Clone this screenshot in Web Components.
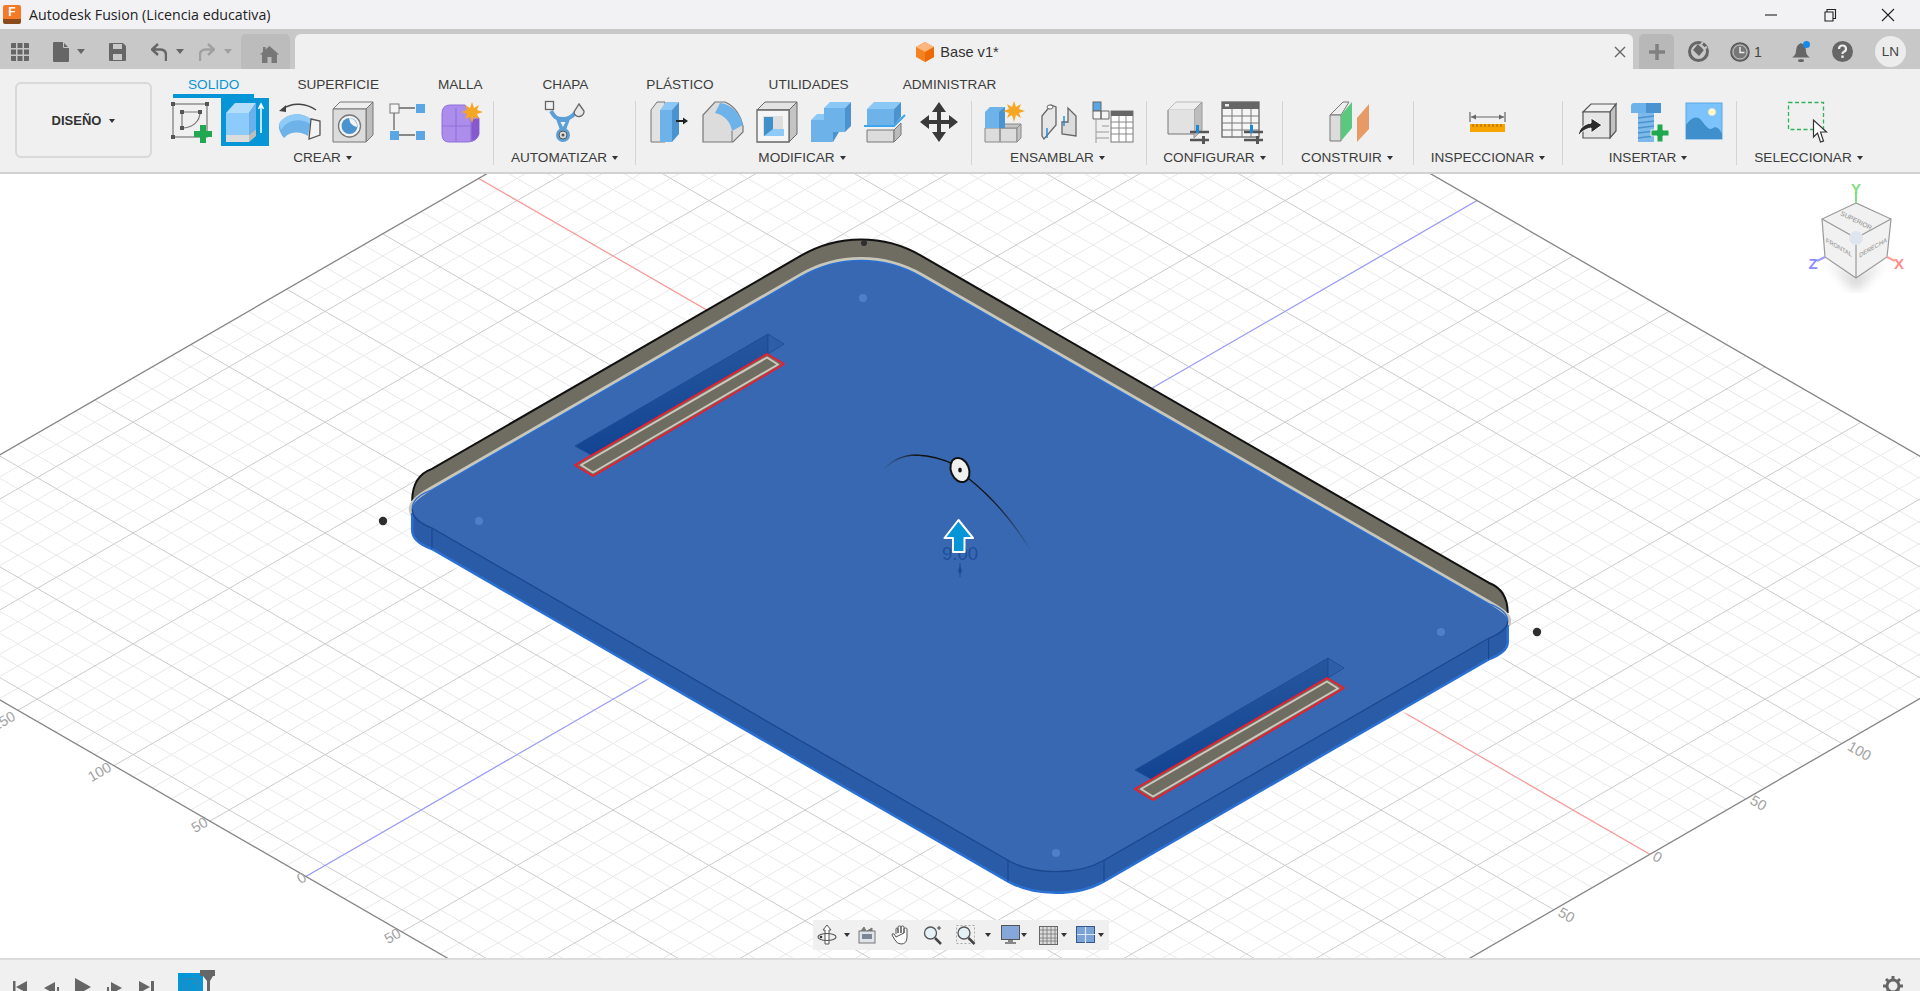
<!DOCTYPE html>
<html lang="es">
<head>
<meta charset="utf-8">
<title>Autodesk Fusion</title>
<style>
  html, body { margin: 0; height: 100%; overflow: hidden; background: #fff; }
  body { font-family: "Liberation Sans", Arial, sans-serif; color: #3c3c3c; }
  fx-app svg { display: block; flex: none; }
</style>
</head>
<body>

<fx-app>
  <fx-titlebar slot="title">Autodesk Fusion (Licencia educativa)</fx-titlebar>

  <fx-tabstrip slot="strip" name="Base v1*"></fx-tabstrip>

  <fx-toolbar slot="toolbar">
    <fx-tab slot="tabs" active>SOLIDO</fx-tab>
    <fx-tab slot="tabs">SUPERFICIE</fx-tab>
    <fx-tab slot="tabs" style="margin-left:1px">MALLA</fx-tab>
    <fx-tab slot="tabs" style="margin-left:2px">CHAPA</fx-tab>
    <fx-tab slot="tabs">PLÁSTICO</fx-tab>
    <fx-tab slot="tabs" style="margin-left:-3px">UTILIDADES</fx-tab>
    <fx-tab slot="tabs" style="margin-left:-4px">ADMINISTRAR</fx-tab>

    <fx-group style="width:342px;--shift:7px" label="CREAR">
      <fx-tool><svg width="48" height="48" viewBox="0 0 48 48">
        <rect x="6" y="6" width="34" height="33" fill="none" stroke="#777" stroke-width="1.2"/>
        <path d="M15 14H33M15 14V30M33 14C33 23 26 30 15 30" fill="none" stroke="#777" stroke-width="1.2"/>
        <path d="M4 4h4v4H4zM38 4h4v4h-4zM4 37h4v4H4zM13 12h4v4h-4zM31 12h4v4h-4zM13 28h4v4h-4z" fill="#555"/>
        <path d="M33 27h6v6h6v6h-6v6h-6v-6h-6v-6h6z" fill="#1fa84f"/>
      </svg></fx-tool>
      <fx-tool active><svg width="48" height="48" viewBox="0 0 48 48">
        <path d="M5 15L14 5H35L28 15Z" fill="#b4dcfb"/>
        <path d="M5 15H28V37H5Z" fill="#8ccbfb"/>
        <path d="M28 15L35 5V31L28 37Z" fill="#68b1ec"/>
        <path d="M5 37H28V44H5Z" fill="#dcdcdc"/>
        <path d="M28 37L35 31V38L28 44Z" fill="#bdbdbd"/>
        <path d="M40 35V7M37.5 11L40 6L42.5 11" fill="none" stroke="#fff" stroke-width="1.5"/>
      </svg></fx-tool>
      <fx-tool><svg width="48" height="48" viewBox="0 0 48 48">
        <path d="M4 26C10 15 26 13 36 21L33 38C26 33 15 33 9 40Q3 33 4 26Z" fill="#6db3ea"/>
        <path d="M4 26C10 15 26 13 36 21L35 26C26 20 13 21 6 32Z" fill="#90cbf7"/>
        <path d="M36 21L45 23V37L34 41Z" fill="#f4f4f4" stroke="#555" stroke-width="1.3"/>
        <path d="M8 11C17 4 31 5 41 12" fill="none" stroke="#444" stroke-width="1.5"/>
        <path d="M4 13L11 7V14Z" fill="#444"/>
      </svg></fx-tool>
      <fx-tool><svg width="48" height="48" viewBox="0 0 48 48">
        <path d="M4 11L11 4H44L37 11Z" fill="#eee" stroke="#777"/>
        <path d="M37 11L44 4V37L37 44Z" fill="#bdbdbd" stroke="#777"/>
        <path d="M4 11H37V44H4Z" fill="#dcdcdc" stroke="#777"/>
        <circle cx="20.5" cy="28" r="11" fill="#f4f4f4" stroke="#777" stroke-width="1.3"/>
        <circle cx="20.5" cy="28" r="8" fill="#4b93cf"/>
        <path d="M20 20A8 8 0 0 1 28 29Q21 28 20 20Z" fill="#f4f4f4"/>
      </svg></fx-tool>
      <fx-tool><svg width="48" height="48" viewBox="0 0 48 48">
        <path d="M16 10H32M11 15V32M16 37H32" stroke="#666" stroke-width="1.3"/>
        <rect x="7" y="6" width="9" height="9" fill="#f4f4f4" stroke="#777"/>
        <rect x="33" y="6" width="9" height="9" fill="#5ba6e4"/>
        <rect x="7" y="33" width="9" height="9" fill="#5ba6e4"/>
        <rect x="33" y="33" width="9" height="9" fill="#5ba6e4"/>
      </svg></fx-tool>
      <fx-tool><svg width="48" height="48" viewBox="0 0 48 48">
        <path d="M5 16Q5 7 13 7H28L42 20V36Q40 44 30 44H12Q5 44 5 36Z" fill="#ac8deb" stroke="#8d6ed8"/>
        <path d="M34 22L42 20V36Q41 41 34 43Z" fill="#8659cf"/>
        <path d="M5 28H34M19 10V44M34 14V43" stroke="#9473db" stroke-width="1.2" fill="none"/>
        <path d="M35 4L37 10L42 7L40 12L46 14L40 16L42 21L37 19L35 25L33 19L28 21L30 16L24 14L30 12L28 7L33 10Z" fill="#f5a623"/>
      </svg></fx-tool>
    </fx-group>

    <fx-group style="width:142px" label="AUTOMATIZAR">
      <fx-tool><svg width="48" height="48" viewBox="0 0 48 48">
        <path d="M10 13C14 20 16 21 22 21C27 21 31 19 34 15" fill="none" stroke="#5b9fd6" stroke-width="4"/>
        <path d="M15 21H29L25 32H19Z" fill="#5b9fd6"/>
        <path d="M19.5 24H24.5L22 29Z" fill="#f0f0f0"/>
        <rect x="4.5" y="3.5" width="8" height="8" fill="#f2f2f2" stroke="#666" stroke-width="1.3"/>
        <path d="M38 6L43 13A5 5 0 1 1 33 14Z" fill="#e8e8e8" stroke="#666" stroke-width="1.3"/>
        <circle cx="22" cy="37" r="7" fill="#5b9fd6"/>
        <circle cx="22" cy="37" r="4" fill="#ddd" stroke="#555"/>
        <circle cx="22" cy="37" r="1.5" fill="#555"/>
      </svg></fx-tool>
    </fx-group>

    <fx-group style="width:336px;--lshift:3px" label="MODIFICAR">
      <fx-tool><svg width="48" height="48" viewBox="0 0 48 48">
        <path d="M6 12L12 4H20V44H6Z" fill="#e2e2e2" stroke="#777"/>
        <path d="M15 12L21 4H34L27 12Z" fill="#8cc8f5"/>
        <path d="M15 12H27V44H15Z" fill="#6db3ea"/>
        <path d="M27 12L34 4V36L27 44Z" fill="#4b93cf"/>
        <path d="M31 23H39" stroke="#222" stroke-width="2"/>
        <path d="M38 19.5L43 23L38 26.5Z" fill="#222"/>
      </svg></fx-tool>
      <fx-tool><svg width="48" height="48" viewBox="0 0 48 48">
        <path d="M4 44V17L16 4H26C36 8 42 18 44 28V34L34 44Z" fill="#dcdcdc" stroke="#777" stroke-width="1.2"/>
        <path d="M21 5C32 6 42 16 44 27L33 33C32 25 26 17 16 15Z" fill="#6db3ea"/>
        <path d="M33 33V44" stroke="#777"/>
      </svg></fx-tool>
      <fx-tool><svg width="48" height="48" viewBox="0 0 48 48">
        <path d="M4 12L12 4H44L36 12Z" fill="#e4e4e4" stroke="#666"/>
        <path d="M36 12L44 4V36L36 44Z" fill="#c4c4c4" stroke="#666"/>
        <path d="M4 12H36V44H4Z" fill="#f5f5f5" stroke="#666" stroke-width="1.3"/>
        <path d="M10 18H30V38H10Z" fill="#dedede"/>
        <path d="M11 19H20V31H31V38H11Z" fill="#8fcbf8"/>
        <path d="M11 19H20V31L11 38Z" fill="#3f8fc9"/>
      </svg></fx-tool>
      <fx-tool><svg width="48" height="48" viewBox="0 0 48 48">
        <path d="M17 10L23 4H44L38 10Z" fill="#8cc8f5"/>
        <path d="M17 10H38V34H17Z" fill="#6db3ea"/>
        <path d="M38 10L44 4V28L38 34Z" fill="#4b93cf"/>
        <path d="M4 22L10 16H17V22Z" fill="#8cc8f5"/>
        <path d="M4 22H26V44H4Z" fill="#6db3ea"/>
        <path d="M26 34H32L26 44Z" fill="#4b93cf"/>
      </svg></fx-tool>
      <fx-tool><svg width="48" height="48" viewBox="0 0 48 48">
        <path d="M6 11L13 4H40L33 11Z" fill="#8cc8f5"/>
        <path d="M6 11H33V27H6Z" fill="#6db3ea"/>
        <path d="M33 11L40 4V19L33 27Z" fill="#4b93cf"/>
        <path d="M3 28H33L44 17" fill="none" stroke="#3fa3ee" stroke-width="2"/>
        <path d="M6 32H33V44H6Z" fill="#dcdcdc" stroke="#777"/>
        <path d="M33 32L40 25V37L33 44Z" fill="#bbb" stroke="#777"/>
      </svg></fx-tool>
      <fx-tool><svg width="48" height="48" viewBox="0 0 48 48">
        <path d="M24 4L31 14H26V22H34V17L43 24L34 31V26H26V34H31L24 44L17 34H22V26H14V31L5 24L14 17V22H22V14H17Z" fill="#3a3a3a"/>
      </svg></fx-tool>
    </fx-group>

    <fx-group style="width:175px;--lshift:3px" label="ENSAMBLAR">
      <fx-tool><svg width="48" height="48" viewBox="0 0 48 48">
        <path d="M4 30H19V44H4Z M19 30H36V44H19Z" fill="#dcdcdc" stroke="#888"/>
        <path d="M19 30L22 26H40L36 30ZM36 30L40 26V40L36 44Z" fill="#c4c4c4" stroke="#888"/>
        <path d="M4 14L9 9H24V30H4Z" fill="#6db3ea"/>
        <path d="M18 14L24 9V30H18Z" fill="#4b93cf"/>
        <path d="M33 3L35 9L40 6L38 11L44 13L38 15L40 20L35 17L33 24L31 17L26 20L28 15L22 13L28 11L26 6L31 9Z" fill="#f5a623"/>
      </svg></fx-tool>
      <fx-tool><svg width="48" height="48" viewBox="0 0 48 48">
        <path d="M7 18L16 7L21 9V27L9 41L7 38Z" fill="#e6e6e6" stroke="#666" stroke-width="1.3"/>
        <path d="M41 18L33 10V24L27 24V36L41 38Z" fill="#dcdcdc" stroke="#666" stroke-width="1.3"/>
        <path d="M12 30V40M29 18V28" stroke="#1e88d8" stroke-width="1.4"/>
        <ellipse cx="15" cy="9" rx="3" ry="2" fill="#fff" stroke="#666"/>
      </svg></fx-tool>
      <fx-tool><svg width="48" height="48" viewBox="0 0 48 48">
        <rect x="4" y="4" width="8" height="9" fill="#5ba6e4" stroke="#666"/>
        <path d="M4 13H12V21H4ZM12 13H20V21H12Z" fill="#f4f4f4" stroke="#666"/>
        <path d="M7 21V45M13 28H20M7 34H20M7 40H20" stroke="#999" fill="none"/>
        <rect x="22" y="13" width="22" height="31" fill="#fff" stroke="#777"/>
        <rect x="22" y="13" width="22" height="5" fill="#666"/>
        <path d="M22 24H44M22 30H44M22 36H44M30 18V44M37 18V44" stroke="#888" fill="none"/>
      </svg></fx-tool>
    </fx-group>

    <fx-group style="width:136px" label="CONFIGURAR">
      <fx-tool><svg width="48" height="48" viewBox="0 0 48 48">
        <path d="M4 12L12 4H38L30 12Z" fill="#eee" stroke="#bbb"/>
        <path d="M30 12L38 4V32L30 40Z" fill="#bdbdbd" stroke="#999"/>
        <path d="M4 12H30V36H4Z" fill="#e2e2e2"/>
        <path d="M4 12V36H30" fill="none" stroke="#777"/>
        <path d="M26 34H45M26 42H45" stroke="#555" stroke-width="2.4"/>
        <path d="M32 27h3v8h-3z" fill="#1e88d8"/>
        <path d="M38 38h3v8h-3z" fill="#555"/>
      </svg></fx-tool>
      <fx-tool><svg width="48" height="48" viewBox="0 0 48 48">
        <rect x="4" y="4" width="37" height="35" fill="#f5f5f5" stroke="#666" stroke-width="1.3"/>
        <rect x="4" y="4" width="37" height="7" fill="#666"/>
        <rect x="7" y="6" width="4" height="2.5" fill="#eee"/>
        <path d="M4 18H41M4 25H41M4 32H41M14 11V39M24 11V39M33 11V39" stroke="#777" fill="none"/>
        <path d="M26 34H45M26 42H45" stroke="#555" stroke-width="2.4"/>
        <path d="M32 27h3v8h-3z" fill="#1e88d8"/>
        <path d="M38 38h3v8h-3z" fill="#555"/>
      </svg></fx-tool>
    </fx-group>

    <fx-group style="width:131px;--shift:3px;--lshift:2px" label="CONSTRUIR">
      <fx-tool><svg width="48" height="48" viewBox="0 0 48 48">
        <path d="M4 17L17 4H23L15 17Z" fill="#eee" stroke="#777"/>
        <path d="M4 17H15V43H4Z" fill="#dcdcdc" stroke="#777"/>
        <path d="M15 17L26 4V30L15 43Z" fill="#5bc880"/>
        <path d="M31 20L43 6V31L31 44Z" fill="#e89a66"/>
      </svg></fx-tool>
    </fx-group>

    <fx-group style="width:149px" label="INSPECCIONAR">
      <fx-tool><svg width="48" height="48" viewBox="0 0 48 48">
        <path d="M6 14V24M41 14V24M7 19H40" stroke="#666" stroke-width="1.2" fill="none"/>
        <path d="M7 19L12 16.5V21.5ZM40 19L35 16.5V21.5Z" fill="#666"/>
        <rect x="6" y="26" width="35" height="8" fill="#f5a400"/>
        <path d="M9 26v3M13 26v3M17 26v3M21 26v3M25 26v3M29 26v3M33 26v3M37 26v3" stroke="#a06a00"/>
      </svg></fx-tool>
    </fx-group>

    <fx-group style="width:174px;--lshift:3px" label="INSERTAR">
      <fx-tool><svg width="48" height="48" viewBox="0 0 48 48">
        <path d="M11 14L19 6H44L38 14Z" fill="#f0f0f0" stroke="#555" stroke-width="1.2"/>
        <path d="M38 14L44 6V33L38 40Z" fill="#c2c2c2" stroke="#555" stroke-width="1.2"/>
        <path d="M11 14H38V40H11Z" fill="#e6e6e6" stroke="#555" stroke-width="1.2"/>
        <path d="M6 38C7 30 12 26 19 25V20L30 27L19 35V30C14 31 10 33 6 38Z" fill="#2c2c2c" stroke="#fff"/>
      </svg></fx-tool>
      <fx-tool><svg width="48" height="48" viewBox="0 0 48 48">
        <path d="M5 8Q5 5 8 5H32Q35 5 35 8V15H5Z" fill="#6db3ea"/>
        <path d="M20 5H35V15H20Z" fill="#4b93cf"/>
        <path d="M12 15H28V44H12Z" fill="#7db9ea"/>
        <path d="M12 20L28 18M12 25L28 23M12 30L28 28M12 35L28 33M12 40L28 38" stroke="#4b93cf" stroke-width="1.4"/>
        <path d="M31 26h6v6h6v6h-6v6h-6v-6h-6v-6h6z" fill="#1fa84f" stroke="#f0f0f0"/>
      </svg></fx-tool>
      <fx-tool><svg width="48" height="48" viewBox="0 0 48 48">
        <rect x="6" y="5" width="36" height="36" fill="#7cc2fb" stroke="#5aa7e4"/>
        <path d="M6 41V27C11 20 16 17 21 22C26 28 29 33 33 30C36 28 40 31 42 36V41Z" fill="#3e8fcb"/>
        <circle cx="32" cy="14" r="3.8" fill="#fdf6c8"/>
      </svg></fx-tool>
    </fx-group>

    <fx-group style="width:147px;border:0;--lshift:4px" label="SELECCIONAR">
      <fx-tool><svg width="48" height="48" viewBox="0 0 48 48"><g transform="translate(-4.500 0)">
        <rect x="6" y="4.500" width="35" height="27" fill="none" stroke="#2fb45a" stroke-width="1.300" stroke-dasharray="4 2.500"/>
        <path d="M31 22V39L35 35L38 44L41 43L38 34H44Z" fill="#fff" stroke="#333" stroke-width="1.200"/>
      </g></svg></fx-tool>
    </fx-group>
  </fx-toolbar>

  <fx-viewport slot="view">
    <fx-part></fx-part>
    <fx-viewcube></fx-viewcube>
    <fx-navbar></fx-navbar>
  </fx-viewport>

  <fx-timeline slot="bottom"></fx-timeline>
</fx-app>

<script>
  class FxApp extends HTMLElement {
    constructor() {
      super();
      const shadow = this.attachShadow({ mode: 'open' });
      shadow.innerHTML = `
        <style>
          :host { display: flex; flex-direction: column; width: 1920px; height: 991px; overflow: hidden; }
        </style>
        <slot name="title"></slot>
        <slot name="strip"></slot>
        <slot name="toolbar"></slot>
        <slot name="view"></slot>
        <slot name="bottom"></slot>
      `;
    }
  }

  class FxTitlebar extends HTMLElement {
    constructor() {
      super();
      const shadow = this.attachShadow({ mode: 'open' });
      shadow.innerHTML = `
        <style>
          :host { display: flex; align-items: center; height: 29px; background: #f2f2f5; color: #222; font: 14.2px "Open Sans", sans-serif; flex: none; }
          .logo { margin: 0 8px 0 3px; width: 18px; height: 19px; border-radius: 2px; background: linear-gradient(#f47a27 72%, #8a4a1c 72%); color: #fff; font: bold 12px/14px "Liberation Sans", sans-serif; text-align: center; }
          .text { flex: 1; }
          svg { display: block; }
          svg:last-child { margin-right: 25px; }
        </style>
        <div class="logo">F</div>
        <div class="text"><slot></slot></div>
        <svg width="14" height="14" viewBox="0 0 14 14" style="margin-right:45px"><path d="M1 7H13" stroke="#222" stroke-width="1.1"/></svg>
        <svg width="14" height="14" viewBox="0 0 14 14" style="margin-right:44px"><path d="M2 4H10V13H2Z M4 4V1.5H12.5V10.5H10" fill="none" stroke="#222" stroke-width="1.1"/></svg>
        <svg width="14" height="14" viewBox="0 0 14 14"><path d="M1 1L13 13M13 1L1 13" stroke="#222" stroke-width="1.1"/></svg>
      `;
    }
  }

  class FxTabstrip extends HTMLElement {
    constructor() {
      super();
      const shadow = this.attachShadow({ mode: 'open' });
      const name = this.getAttribute('name') || '';
      shadow.innerHTML = `
        <style>
          :host { display: flex; align-items: flex-end; height: 40px; background: #c8c8c8; flex: none; font: 14.6px "Liberation Sans", sans-serif; color: #333; box-sizing: border-box; }
          .cell { height: 35px; display: flex; align-items: center; }
          .home { width: 49px; background: #bcbcbc; border-radius: 5px 5px 0 0; justify-content: center; margin-left: 9px; box-sizing: border-box; padding: 6px 0 0 7px; }
          .doc { width: 1338px; margin-left: 5px; background: #f0f0f0; border-radius: 6px 6px 0 0; position: relative; justify-content: center; gap: 5px; box-sizing: border-box; padding-right: 14px; padding-top: 1px; }
          .doc .x { position: absolute; right: 7px; top: 12px; }
          .plus { width: 35px; background: #b8b8b8; border-radius: 5px 5px 0 0; justify-content: center; margin-left: 6px; }
          .caret { width: 0; height: 0; border: 4.5px solid transparent; border-top: 5px solid #666; border-bottom: 0; }
          .one { margin: 0 0 0 4px; color: #444; font-size: 14px; }
          .avatar { width: 31px; height: 31px; border-radius: 50%; background: #ececec; display: flex; align-items: center; justify-content: center; font-size: 13.5px; color: #444; margin-left: 22px; }
        </style>
        <div class="cell" style="margin-left:11px">
          <svg width="18" height="18" viewBox="0 0 18 18" fill="#666"><path d="M0 1Q0 0 1 0H5V5H0ZM6.5 0H11.5V5H6.5ZM13 0H17Q18 0 18 1V5H13ZM0 6.500H5V11.500H0ZM6.500 6.500H11.500V11.500H6.500ZM13 6.500H18V11.500H13ZM0 13H5V18H1Q0 18 0 17ZM6.500 13H11.500V18H6.500ZM13 13H18V17Q18 18 17 18H13Z"/></svg>
        </div>
        <div class="cell" style="margin-left:24px">
          <svg width="16" height="20" viewBox="0 0 16 20" fill="#666"><path d="M1 0H10L16 6V19Q16 20 15 20H1Q0 20 0 19V1Q0 0 1 0Z"/><path d="M10.500 0V5.500H16" fill="none" stroke="#c8c8c8"/></svg>
          <div class="caret" style="margin-left:8px"></div>
        </div>
        <div class="cell" style="margin-left:24px">
          <svg width="17" height="18" viewBox="0 0 17 18" fill="#666"><path d="M1 0H14L17 3V17Q17 18 16 18H1Q0 18 0 17V1Q0 0 1 0ZM4 1V6H13V1ZM4 11V17H13V11Z" fill-rule="evenodd"/></svg>
        </div>
        <div class="cell" style="margin-left:25px">
          <svg width="16" height="18" viewBox="0 0 16 18"><path d="M7 1L1 6.500L7 12M2 6.500H9Q15 6.500 15 12V18" fill="none" stroke="#666" stroke-width="2.400"/></svg>
          <div class="caret" style="margin-left:9px"></div>
        </div>
        <div class="cell" style="margin-left:15px">
          <svg width="16" height="18" viewBox="0 0 16 18"><path d="M9 1L15 6.500L9 12M14 6.500H7Q1 6.500 1 12V18" fill="none" stroke="#a0a0a0" stroke-width="2.400"/></svg>
          <div class="caret" style="margin-left:9px;border-top-color:#a0a0a0"></div>
        </div>
        <div class="cell home">
          <svg width="19" height="17" viewBox="0 0 19 17" fill="#777"><path d="M9.500 0L19 8.500H17V17H11.500V11H7.500V17H2V8.500H0L3 5.800V1H5.500V3.600Z"/></svg>
        </div>
        <div class="cell doc">
          <svg width="20" height="20" viewBox="0 0 20 20"><path d="M10 0L19 5V15L10 20L1 15V5Z" fill="#f58220"/><path d="M10 0L19 5L10 10L1 5Z" fill="#fbb77e"/><path d="M10 10L19 5V15L10 20Z" fill="#ec6a08"/></svg>
          <span>${name}</span>
          <svg class="x" width="12" height="12" viewBox="0 0 12 12"><path d="M1 1L11 11M11 1L1 11" stroke="#666" stroke-width="1.400"/></svg>
        </div>
        <div class="cell plus">
          <svg width="16" height="16" viewBox="0 0 16 16"><path d="M8 0V16M0 8H16" stroke="#808080" stroke-width="3.500"/></svg>
        </div>
        <div class="cell" style="margin-left:14px">
          <svg width="21" height="21" viewBox="0 0 21 21"><circle cx="10.500" cy="10.500" r="9" fill="none" stroke="#666" stroke-width="3"/><path d="M10 3L16 9L11 15L5 9Z" fill="#666"/><path d="M15 1L12 5M19 6L15 8" stroke="#c8c8c8" stroke-width="2"/></svg>
        </div>
        <div class="cell" style="margin-left:21px">
          <svg width="20" height="20" viewBox="0 0 20 20"><circle cx="10" cy="10" r="9.200" fill="#777" stroke="#555" stroke-width="1.200"/><circle cx="10" cy="10" r="7" fill="none" stroke="#ddd" stroke-width=".8"/><path d="M10 5V10.500H14.500" fill="none" stroke="#eee" stroke-width="1.400"/></svg>
          <span class="one">1</span>
        </div>
        <div class="cell" style="margin-left:30px">
          <svg width="18" height="22" viewBox="0 0 18 22"><path d="M9 2Q14 4 14 10Q14 14 18 16.500H0Q4 14 4 10Q4 4 9 2Z" fill="#666"/><ellipse cx="9" cy="19.500" rx="3" ry="1.500" fill="#666"/><circle cx="14.500" cy="3.500" r="3.500" fill="#1789e6"/></svg>
        </div>
        <div class="cell" style="margin-left:22px">
          <svg width="21" height="21" viewBox="0 0 21 21"><circle cx="10.500" cy="10.500" r="10.500" fill="#666"/><path d="M7 8Q7 4.500 10.500 4.500T14 8Q14 10 11.500 11Q10.500 11.500 10.500 13" fill="none" stroke="#eee" stroke-width="2.200"/><rect x="9.300" y="14.500" width="2.400" height="2.400" fill="#eee"/></svg>
        </div>
        <div class="cell"><div class="avatar">LN</div></div>
      `;
    }
  }

  class FxToolbar extends HTMLElement {
    constructor() {
      super();
      const shadow = this.attachShadow({ mode: 'open' });
      shadow.innerHTML = `
        <style>
          :host { display: flex; height: 105px; box-sizing: border-box; background: #f0f0f0; border-bottom: 2px solid #d2d2d2; flex: none; }
          .design { width: 137px; height: 76px; margin: 13px 0 0 15px; box-sizing: border-box; border: 2px solid #d8d8d8; border-radius: 6px; display: flex; align-items: center; justify-content: center; gap: 8px; font: bold 13px "Liberation Sans", sans-serif; color: #333; }
          .design i { width: 0; height: 0; border: 3.500px solid transparent; border-top: 4.500px solid #333; border-bottom: 0; margin-top: 1px; }
          .main { display: flex; flex-direction: column; }
          .tabs { display: flex; gap: 28px; height: 29px; margin-left: 21px; flex: none; }
          .groups { display: flex; align-items: flex-start; }
        </style>
        <div class="design">DISEÑO <i></i></div>
        <div class="main">
          <div class="tabs"><slot name="tabs"></slot></div>
          <div class="groups"><slot></slot></div>
        </div>
      `;
    }
  }

  class FxTab extends HTMLElement {
    constructor() {
      super();
      const shadow = this.attachShadow({ mode: 'open' });
      shadow.innerHTML = `
        <style>
          :host { display: block; padding: 8px 15px 0; height: 29px; box-sizing: border-box; font: 13.600px "Liberation Sans", sans-serif; color: #3c3c3c; white-space: nowrap; }
          :host([active]) { color: #0696d7; border-bottom: 4px solid #0696d7; }
        </style>
        <slot></slot>
      `;
    }
  }

  class FxGroup extends HTMLElement {
    constructor() {
      super();
      const shadow = this.attachShadow({ mode: 'open' });
      const label = this.getAttribute('label') || '';
      shadow.innerHTML = `
        <style>
          :host { display: block; box-sizing: border-box; height: 64px; margin-top: 3px; border-right: 1.500px solid #d4d4d4; flex: none; }
          .row { display: flex; justify-content: center; margin-top: -3px; height: 48px; padding-left: var(--shift, 0); }
          .label { display: flex; justify-content: center; align-items: center; gap: 5px; height: 23px; padding-right: var(--lshift, 0); font: 13.600px "Liberation Sans", sans-serif; color: #3c3c3c; }
          .label i { width: 0; height: 0; border: 3px solid transparent; border-top: 4.500px solid #333; border-bottom: 0; }
        </style>
        <div class="row"><slot></slot></div>
        <div class="label">${label} <i></i></div>
      `;
    }
  }

  class FxTool extends HTMLElement {
    constructor() {
      super();
      const shadow = this.attachShadow({ mode: 'open' });
      shadow.innerHTML = `
        <style>
          :host { display: block; width: 54px; height: 48px; flex: none; }
          .box { width: 48px; height: 48px; margin: 0 3px; }
          :host([active]) .box { background: #0696d7; }
        </style>
        <div class="box"><slot></slot></div>
      `;
    }
  }

  class FxViewport extends HTMLElement {
    constructor() {
      super();
      const shadow = this.attachShadow({ mode: 'open' });

      // grid is a diamond, lines are y + m*x = c and y - m*x = d
      const m = 0.5771, step = 22.16;
      const c0 = 942.2, d0 = 677.8;
      const cMin = c0 - 22 * step, cMax = c0 + 39 * step;
      const dMin = d0 - 60 * step, dMax = d0 + step;
      const at = (c, d) => `${((c - d) / (2 * m)).toFixed(1)} ${((c + d) / 2).toFixed(1)}`;
      let minor = '', major = '';

      for (let n = -21; n < 39; n++) {
        const c = c0 + n * step;
        const seg = `M${at(c, dMax)}L${at(c, dMin)}`;
        if (n % 5 === 0) major += seg; else minor += seg;
      }
      for (let n = -59; n < 1; n++) {
        const d = d0 + n * step;
        const seg = `M${at(cMax, d)}L${at(cMin, d)}`;
        if (n % 5 === 0) major += seg; else minor += seg;
      }

      const blueC = c0 + 5 * step, redD = d0 - 35 * step;

      const labels = [
        [4, 722, -30, '150'], [100, 773, -30, '100'], [200, 826, -30, '50'], [302, 879, -30, '0'], [393, 937, -30, '50'],
        [1566, 916, 30, '50'], [1657, 858, 30, '0'], [1758, 804, 30, '50'], [1859, 752, 30, '100']
      ].map(l => `<text x="0" y="0" transform="translate(${l[0]} ${l[1]}) rotate(${l[2]})" text-anchor="middle" dominant-baseline="middle">${l[3]}</text>`).join('');

      shadow.innerHTML = `
        <style>
          :host { display: block; position: relative; width: 1920px; height: 784px; flex: none; background: #fff; overflow: hidden; }
          svg { position: absolute; left: 0; top: 0; display: block; }
          text { font: 14.500px "Liberation Sans", sans-serif; fill: #a2a2a2; }
        </style>
        <svg width="1920" height="784" viewBox="0 174 1920 784">
          <path d="${minor}" stroke="#e9e9e9" stroke-width="1" fill="none"/>
          <path d="${major}" stroke="#cbcbcb" stroke-width="1" fill="none"/>
          <path d="M${at(blueC, dMax)}L${at(blueC, dMin)}" stroke="#9c9cff" stroke-width="1.200"/>
          <path d="M${at(cMax, redD)}L${at(cMin, redD)}" stroke="#ff9c9c" stroke-width="1.200"/>
          <path d="M${at(cMin, dMin)}L${at(cMin, dMax)}L${at(cMax, dMax)}L${at(cMax, dMin)}Z" stroke="#858585" stroke-width="1.300" fill="none"/>
          ${labels}
        </svg>
        <slot></slot>
      `;
    }
  }

  class FxPart extends HTMLElement {
    constructor() {
      super();
      const shadow = this.attachShadow({ mode: 'open' });

      // plate corners in page coordinates with per-corner rounding
      const C = [
        { x: 861, y: 242, d: 60, k: 0.62 },
        { x: 1518.6, y: 621, d: 30, k: 0.85 },
        { x: 1056, y: 888, d: 48, k: 0.55 },
        { x: 399, y: 509, d: 33, k: 0.8 }
      ];
      const pts = C.map((v, i) => {
        const p = C[(i + 3) % 4], n = C[(i + 1) % 4];
        const a = { x: v.x + (p.x - v.x) * v.d / Math.abs(p.x - v.x), y: v.y + (p.y - v.y) * v.d / Math.abs(p.x - v.x) };
        const b = { x: v.x + (n.x - v.x) * v.d / Math.abs(n.x - v.x), y: v.y + (n.y - v.y) * v.d / Math.abs(n.x - v.x) };
        const c1 = { x: a.x + v.k * (v.x - a.x), y: a.y + v.k * (v.y - a.y) };
        const c2 = { x: b.x + v.k * (v.x - b.x), y: b.y + v.k * (v.y - b.y) };
        const apex = { x: (a.x + b.x) / 8 + 3 * (c1.x + c2.x) / 8, y: (a.y + b.y) / 8 + 3 * (c1.y + c2.y) / 8 };
        return { a, b, c1, c2, apex };
      });
      const [T, R, B, L] = pts;
      const f = n => n.toFixed(1);
      const P = (p, dy) => `${f(p.x)} ${f(p.y + dy)}`;
      const shape = dy => {
        let s = '';
        pts.forEach((p, i) => {
          s += `${i ? 'L' : 'M'}${P(p.a, dy)}C${P(p.c1, dy)} ${P(p.c2, dy)} ${P(p.b, dy)}`;
        });
        return s + 'Z';
      };
      // front half, left apex round the bottom to the right apex
      const front = dy =>
        `M${P(L.apex, dy)}Q${f(L.apex.x)} ${f(L.a.y + dy - 7)} ${P(L.a, dy)}` +
        `L${P(B.b, dy)}C${P(B.c2, dy)} ${P(B.c1, dy)} ${P(B.a, dy)}` +
        `L${P(R.b, dy)}Q${f(R.apex.x)} ${f(R.b.y + dy - 7)} ${P(R.apex, dy)}`;
      // back half, the ends of the curve drop by e so the shoulder reads round
      const back = (dy, e = 0) =>
        `M${f(L.apex.x)} ${f(L.apex.y + dy + e)}Q${f(L.apex.x)} ${f(L.b.y + dy + 7)} ${P(L.b, dy)}` +
        `L${P(T.a, dy)}C${P(T.c1, dy)} ${P(T.c2, dy)} ${P(T.b, dy)}` +
        `L${P(R.a, dy)}Q${f(R.apex.x)} ${f(R.a.y + dy + 7)} ${f(R.apex.x)} ${f(R.apex.y + dy + e)}`;
      const D = 21;

      const slot = (ox, oy) => `
        <path d="M${ox} ${oy - 19}L${ox + 193} ${oy - 131}V${oy - 111}L${ox + 18} ${oy - 9}Z" fill="url(#wall)" stroke="#1b4a95" stroke-width=".8"/>
        <path d="M${ox + 193} ${oy - 131}L${ox + 209} ${oy - 121}L${ox + 193} ${oy - 111}Z" fill="#2f5ea9" stroke="#1b4a95" stroke-width=".8"/>
        <path d="M${ox} ${oy}L${ox + 18} ${oy + 11}L${ox + 209} ${oy - 101}L${ox + 192} ${oy - 111}Z" fill="#6f6c62" stroke="#ef1c2c" stroke-width="1.800" stroke-linejoin="round"/>
        <path d="M${ox + 6} ${oy}L${ox + 18} ${oy + 7.500}L${ox + 203} ${oy - 100.500}L${ox + 192} ${oy - 107.500}Z" fill="#6f6c62" stroke="#cfc8bc" stroke-width="2" stroke-linejoin="round"/>
      `;

      shadow.innerHTML = `
        <style>
          :host { display: block; position: absolute; left: 0; top: 0; width: 1920px; height: 784px; }
          svg { display: block; }
          text { font: 18.500px "Liberation Sans", sans-serif; fill: #1f4f9c; }
        </style>
        <svg width="1920" height="784" viewBox="0 174 1920 784">
          <defs>
            <linearGradient id="wall" x1="0" y1="0" x2="0.1" y2="1">
              <stop offset="0" stop-color="#28589f"/><stop offset="1" stop-color="#134492"/>
            </linearGradient>
            <linearGradient id="arcL" gradientUnits="userSpaceOnUse" x1="883" y1="470" x2="950" y2="462">
              <stop offset="0" stop-color="#111" stop-opacity="0"/><stop offset=".6" stop-color="#111"/>
            </linearGradient>
            <linearGradient id="arcR" gradientUnits="userSpaceOnUse" x1="968" y1="478" x2="1030" y2="550">
              <stop offset=".3" stop-color="#111"/><stop offset="1" stop-color="#111" stop-opacity="0"/>
            </linearGradient>
            <filter id="soft"><feGaussianBlur stdDeviation=".7"/></filter>
            <filter id="halo"><feGaussianBlur stdDeviation="2"/></filter>
          </defs>

          <path d="${front(D + 1)}" fill="none" stroke="#fff" stroke-width="8" filter="url(#halo)"/>

          <path d="${back(-D, 13)}L${f(R.apex.x)} ${f(R.apex.y)}L${f(L.apex.x)} ${f(L.apex.y)}Z" fill="#6f6c62"/>
          <path d="${back(-D, 13)}" fill="none" stroke="#111" stroke-width="2"/>
          <path d="${shape(0)}" fill="none" stroke="#c9c6ba" stroke-width="7"/>

          <path d="${front(D)}L${f(R.apex.x)} ${f(R.apex.y)}L${f(L.apex.x)} ${f(L.apex.y)}Z" fill="#2a5ba6"/>
          <path d="${front(D)}" fill="none" stroke="#2c6fd2" stroke-width="2.500" filter="url(#soft)"/>
          <path d="M${f(L.apex.x)} ${f(L.apex.y + 4)}V${f(L.apex.y + D)}M${f(R.apex.x)} ${f(R.apex.y + 4)}V${f(R.apex.y + D)}" stroke="#2c6fd2" stroke-width="2.500"/>

          <path d="${shape(0)}" fill="#3868b1"/>
          <path d="${back(0)}" fill="none" stroke="#2c6fd2" stroke-width="1.400"/>
          <path d="${front(0)}" fill="none" stroke="#1b478f" stroke-width="1.300"/>
          <path d="M${P(L.a, 0)}v${D}M${P(B.b, 0)}v${D}M${P(B.a, 0)}v${D}M${P(R.b, 0)}v${D}" stroke="#1b478f" stroke-width="1.100"/>

          ${slot(575, 465)}
          ${slot(1135, 789)}

          <g fill="#4f7fc6"><circle cx="479" cy="521" r="4"/><circle cx="863" cy="298" r="4"/><circle cx="1441" cy="632" r="4"/><circle cx="1056" cy="853" r="4"/></g>
          <g fill="#2e2e2e" filter="url(#soft)"><circle cx="383" cy="521" r="4.200"/><circle cx="1537" cy="632" r="4.200"/><circle cx="864" cy="243" r="3"/></g>

          <path d="M883 470Q897 455 916 455Q938 456 955 465" fill="none" stroke="url(#arcL)" stroke-width="1.500"/>
          <path d="M968 478Q1008 510 1035 558" fill="none" stroke="url(#arcR)" stroke-width="1.300"/>
          <ellipse cx="960" cy="470" rx="9" ry="12.500" transform="rotate(-22 960 470)" fill="#f0f0f0" stroke="#111" stroke-width="2"/>
          <ellipse cx="960" cy="470" rx="1.800" ry="2.600" fill="#111"/>

          <text x="960" y="560" text-anchor="middle">9.00</text>
          <path d="M960 563V577" stroke="#1b4a95" stroke-width="1"/>
          <path d="M960 566L962 571L960 574L958 571Z" fill="#1b4a95"/>
          <path d="M958.500 520L973 538H964.500V552H953V538H944.500Z" fill="#0696d7" stroke="#fff" stroke-width="2" stroke-linejoin="round"/>
        </svg>
      `;
    }
  }

  class FxViewcube extends HTMLElement {
    constructor() {
      super();
      const shadow = this.attachShadow({ mode: 'open' });
      shadow.innerHTML = `
        <style>
          :host { display: block; position: absolute; right: 0; top: -4px; width: 140px; height: 130px; }
          svg { display: block; }
          text { font: 6.500px "Liberation Sans", sans-serif; fill: #8a8a8a; }
          .axis { font: bold 15px "Liberation Sans", sans-serif; }
        </style>
        <svg width="140" height="130" viewBox="0 0 140 130">
          <defs><filter id="b"><feGaussianBlur stdDeviation="6"/></filter></defs>
          <path d="M47 90L76 120L105 90L76 108Z" fill="#999" opacity=".55" filter="url(#b)"/>
          <path d="M76 33L42 49L45 87L76 108L107 87L111 49Z" fill="#f1f1f1" stroke="#9a9a9a" stroke-width="1.200"/>
          <path d="M42 49L76 68L111 49M76 68V108" fill="none" stroke="#9a9a9a" stroke-width="1.200"/>
          <circle cx="76" cy="68" r="7" fill="#dfe5ee"/>
          <text transform="translate(76 51) rotate(26)" text-anchor="middle" dominant-baseline="middle">SUPERIOR</text>
          <text transform="matrix(.866 .5 0 1 59 78)" text-anchor="middle" dominant-baseline="middle">FRONTAL</text>
          <text transform="matrix(.866 -.5 0 1 93 78)" text-anchor="middle" dominant-baseline="middle">DERECHA</text>
          <path d="M76 33V22" stroke="#7fe07f" stroke-width="2"/>
          <path d="M45 87L37 91" stroke="#9c9cff" stroke-width="2"/>
          <path d="M107 87L115 91" stroke="#ff9c9c" stroke-width="2"/>
          <text class="axis" x="76" y="24" text-anchor="middle" style="fill:#7fe07f">Y</text>
          <text class="axis" x="33" y="99" text-anchor="middle" style="fill:#8c8cff">Z</text>
          <text class="axis" x="119" y="99" text-anchor="middle" style="fill:#ff8c8c">X</text>
        </svg>
      `;
    }
  }

  class FxNavbar extends HTMLElement {
    constructor() {
      super();
      const shadow = this.attachShadow({ mode: 'open' });
      const caret = '<i></i>';
      shadow.innerHTML = `
        <style>
          :host { display: flex; align-items: center; position: absolute; left: 813px; top: 746px; width: 296px; height: 30px; background: #f0f0f0; padding-left: 4px; box-sizing: border-box; }
          svg { display: block; flex: none; }
          i { width: 0; height: 0; border: 3.500px solid transparent; border-top: 4.500px solid #333; border-bottom: 0; flex: none; }
        </style>
        <svg width="20" height="22" viewBox="0 0 20 22" style="margin-right:7px"><path d="M10 1L14 6H12V20H8V6H6Z" fill="#fff" stroke="#555"/><ellipse cx="10" cy="13" rx="9" ry="3.500" fill="none" stroke="#555" stroke-width="1.100"/><circle cx="4" cy="13" r="1.300" fill="#333"/></svg>
        ${caret}
        <svg width="18" height="18" viewBox="0 0 18 18" style="margin-left:8px"><rect x="1" y="5" width="16" height="12" fill="#dfe3ea" stroke="#777"/><rect x="4" y="8" width="10" height="5" fill="#7c8796"/><path d="M3 5L6 1L8 5M9 5L14 2V5" fill="#777" stroke="#777"/></svg>
        <svg width="20" height="20" viewBox="0 0 20 20" style="margin-left:15px"><path d="M5 9V4Q5 3 6 3T7 4V8M7 8V2Q7 1 8.500 1T10 2V8M10 8V2Q10 1 11.500 1T13 2V8M13 8V4Q13 3 14.500 3T16 4V12Q16 19 10 19Q6 19 4 15L1 10Q1 8 3 9L5 12Z" fill="#fff" stroke="#555"/></svg>
        <svg width="20" height="20" viewBox="0 0 20 20" style="margin-left:12px"><circle cx="7.500" cy="8" r="6" fill="#e4f1f7" stroke="#555" stroke-width="1.300"/><path d="M12 13L18 19" stroke="#444" stroke-width="2.500"/><path d="M16 1V5M14 3H18" stroke="#444"/></svg>
        <svg width="20" height="20" viewBox="0 0 20 20" style="margin-left:13px"><rect x=".5" y=".5" width="18" height="18" fill="none" stroke="#aaa" stroke-dasharray="2 2"/><circle cx="8" cy="8" r="6" fill="#e4f1f7" stroke="#555" stroke-width="1.300"/><path d="M12.500 13L18.500 19" stroke="#444" stroke-width="2.500"/></svg>
        <span style="width:9px"></span>${caret}
        <svg width="20" height="20" viewBox="0 0 20 20" style="margin-left:10px"><rect x=".5" y=".5" width="18" height="14" fill="#86a8d8" stroke="#555"/><path d="M7 15H12V17H15V19H4V17H7Z" fill="#888"/></svg>
        ${caret}
        <svg width="20" height="19" viewBox="0 0 20 19" style="margin-left:12px"><rect x=".5" y=".5" width="18" height="18" fill="#ddd" stroke="#666"/><path d="M4 1V18M8 1V18M12 1V18M16 1V18M1 4H18M1 8H18M1 12H18M1 15H18" stroke="#777" stroke-width=".8"/></svg>
        <span style="width:2px"></span>${caret}
        <svg width="20" height="18" viewBox="0 0 20 18" style="margin-left:9px"><rect x=".5" y=".5" width="18" height="16" fill="#7ba3d8" stroke="#33588a"/><path d="M9.500 1V17M1 8.500H19" stroke="#dde6f2" stroke-width="1.200"/></svg>
        <span style="width:2px"></span>${caret}
      `;
    }
  }

  class FxTimeline extends HTMLElement {
    constructor() {
      super();
      const shadow = this.attachShadow({ mode: 'open' });
      shadow.innerHTML = `
        <style>
          :host { display: block; position: relative; flex: none; height: 33px; box-sizing: border-box; background: #f0f0f0; border-top: 2px solid #dcdcdc; overflow: hidden; }
          .row { display: flex; align-items: flex-start; gap: 16px; padding: 19px 0 0 13px; }
          .feature { position: absolute; left: 178px; top: 13px; width: 25px; height: 20px; background: #0696d7; }
          .marker { position: absolute; left: 200px; top: 10px; }
          .gear { position: absolute; left: 1883px; top: 16px; }
        </style>
        <div class="row">
          <svg width="14" height="14" viewBox="0 0 14 14" fill="#666"><path d="M0 2H2.500V14H0ZM14 2V14L3 8Z"/></svg>
          <svg width="16" height="14" viewBox="0 0 16 14" fill="#666" style="margin-top:2px"><path d="M12 1V13L1 7ZM14 6H16V14H14Z"/></svg>
          <svg width="16" height="16" viewBox="0 0 16 16" fill="#666" style="margin-top:-1px"><path d="M0 0L16 9L0 18Z"/></svg>
          <svg width="16" height="14" viewBox="0 0 16 14" fill="#666" style="margin-top:2px"><path d="M4 1V13L15 7ZM0 6H2V14H0Z"/></svg>
          <svg width="15" height="14" viewBox="0 0 15 14" fill="#666"><path d="M0 2V14L11 8ZM12 2H15V14H12Z"/></svg>
        </div>
        <div class="feature"><svg width="25" height="20" viewBox="0 0 25 20"><path d="M6 6H20V20H6ZM10 18C11 12 14 10 18 10" fill="none" stroke="#4e7f9f" stroke-width="1"/></svg></div>
        <svg class="marker" width="16" height="23" viewBox="0 0 16 23"><path d="M0 0H15V6H0Z" fill="#666"/><path d="M3 6H13L10 11V23H7V11Z" fill="#666"/></svg>
        <svg class="gear" width="20" height="20" viewBox="0 0 20 20"><circle cx="10" cy="10" r="6" fill="none" stroke="#666" stroke-width="3"/><path d="M10 0V4M10 16V20M0 10H4M16 10H20M3 3L6 6M14 14L17 17M17 3L14 6M6 14L3 17" stroke="#666" stroke-width="3"/></svg>
      `;
    }
  }

  customElements.define('fx-app', FxApp);
  customElements.define('fx-titlebar', FxTitlebar);
  customElements.define('fx-tabstrip', FxTabstrip);
  customElements.define('fx-toolbar', FxToolbar);
  customElements.define('fx-tab', FxTab);
  customElements.define('fx-group', FxGroup);
  customElements.define('fx-tool', FxTool);
  customElements.define('fx-viewport', FxViewport);
  customElements.define('fx-part', FxPart);
  customElements.define('fx-viewcube', FxViewcube);
  customElements.define('fx-navbar', FxNavbar);
  customElements.define('fx-timeline', FxTimeline);
</script>
</body>
</html>
